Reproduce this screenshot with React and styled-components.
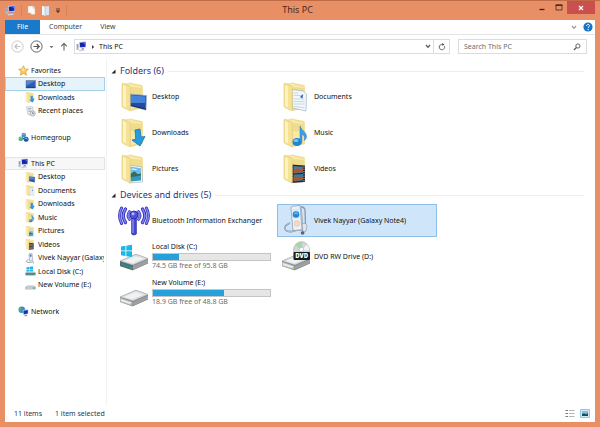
import React from "react";
import styled, { createGlobalStyle } from "styled-components";

const GlobalStyle = createGlobalStyle`
  * { box-sizing: border-box; }
  body { margin: 0; background: #e98f66; }
  body, button, input {
    font-family: "Noto Sans", "Open Sans", sans-serif;
    font-size: 7px;
    line-height: 10px;
    color: #111;
  }
  button { border: 0; padding: 0; background: none; text-align: left; }
  svg { display: block; flex: none; }
`;

const Window = styled.div`
  display: flex;
  flex-direction: column;
  height: 100vh;
  border-top: 1px solid #bf6b46;
  padding: 0 5px 5px;
  background: #e98f66;
`;

const TitleBar = styled.header`
  display: grid;
  grid-template-columns: 1fr auto 1fr;
  height: 19px;
  flex: none;
`;

const QuickAccess = styled.div`
  display: flex;
  align-items: center;
  gap: 5px;
`;

const Divider = styled.span`
  width: 1px;
  height: 11px;
  background: #d98259;
`;

const Title = styled.h1`
  margin: 0;
  padding-right: 5px;
  font-size: 9px;
  font-weight: 400;
  line-height: 17px;
  color: #4d2819;
`;

const WindowButtons = styled.div`
  display: flex;
  justify-content: flex-end;
  align-items: flex-start;
`;

const WindowButton = styled.button`
  display: flex;
  align-items: center;
  justify-content: center;
  width: ${(p) => (p.$close ? 28 : 17)}px;
  height: 13px;
  background: ${(p) => (p.$close ? "#c9504f" : "transparent")};
`;

const Body = styled.div`
  display: flex;
  flex-direction: column;
  flex: 1;
  min-height: 0;
  background: #fff;
`;

const Ribbon = styled.div`
  display: flex;
  align-items: center;
  flex: none;
  height: 15px;
  padding-right: 2px;
  border-bottom: 1px solid #e4e5e7;
`;

const Tab = styled.button`
  align-self: stretch;
  padding: 0 9px;
  color: #444;
`;

const FileTab = styled(Tab)`
  width: 35px;
  background: #1979ca;
  color: #fff;
  text-align: center;
`;

const RibbonTools = styled.div`
  display: flex;
  align-items: center;
  gap: 6px;
  margin-left: auto;
`;

const Toolbar = styled.div`
  display: flex;
  align-items: center;
  flex: none;
  height: 23px;
  padding: 0 8px 0 6px;
`;

const NavButtons = styled.div`
  display: flex;
  align-items: center;
  gap: 6px;
  width: 63px;
`;

const AddressBox = styled.div`
  display: flex;
  align-items: center;
  flex: 1;
  height: 15px;
  border: 1px solid #dcdcdc;
`;

const Crumb = styled.button`
  display: flex;
  align-items: center;
  gap: 4px;
  flex: 1;
  padding-left: 1px;
`;

const BoxButton = styled.button`
  display: flex;
  align-items: center;
  justify-content: center;
  width: ${(p) => (p.$ruled ? 16 : 11)}px;
  height: 13px;
  border-left: ${(p) => (p.$ruled ? "1px solid #dcdcdc" : "0")};
`;

const SearchBox = styled.label`
  display: flex;
  align-items: center;
  width: 129px;
  height: 15px;
  margin-left: 8px;
  padding: 0 5px;
  border: 1px solid #dcdcdc;
`;

const SearchInput = styled.input`
  flex: 1;
  min-width: 0;
  padding: 0;
  border: 0;
  outline: 0;
  background: none;
  &::placeholder { color: #6d6d6d; opacity: 1; }
`;

const Panes = styled.div`
  display: flex;
  flex: 1;
  min-height: 0;
`;

const Sidebar = styled.nav`
  display: flex;
  flex-direction: column;
  gap: 13px;
  width: 102px;
  flex: none;
  padding-top: 6px;
  border-right: 1px solid #f3f3f3;
`;

const TreeGroup = styled.div`
  display: flex;
  flex-direction: column;
`;

const TreeRow = styled.button`
  display: flex;
  align-items: center;
  gap: 2px;
  width: 100px;
  height: 13px;
  padding-left: ${(p) => (p.$nested ? 19 : 12)}px;
  border: 1px solid transparent;
  overflow: hidden;
  white-space: nowrap;
  &:nth-child(even) { height: 14px; }
  ${(p) => p.$state === "selected" && "background: #e5f3fb; border-color: #a5d2e9;"}
  ${(p) => p.$state === "current" && "background: #f7f7f7; border-color: #e3e3e3;"}
`;

const Main = styled.main`
  flex: 1;
  min-width: 0;
  padding: 6px 11px 0 4px;
`;

const Section = styled.section`
  margin-bottom: 3px;
`;

const SectionHeader = styled.div`
  display: flex;
  align-items: center;
  gap: 4px;
  height: 14px;
  margin-bottom: 2px;
  &::after {
    content: "";
    flex: 1;
    height: 1px;
    background: #ededf0;
  }
`;

const SectionTitle = styled.h2`
  margin: 0;
  font-size: 9px;
  font-weight: 400;
  line-height: 14px;
  color: #27357f;
`;

const Tiles = styled.div`
  display: grid;
  grid-template-columns: 160px 160px;
  gap: 3px 2px;
  padding-left: 4px;
`;

const Tile = styled.button`
  display: flex;
  align-items: center;
  gap: 3px;
  height: 33px;
  padding: 0 3px;
  border: 1px solid ${(p) => (p.$selected ? "#8dbfe8" : "transparent")};
  background: ${(p) => (p.$selected ? "#cfe5fa" : "transparent")};
`;

const TileText = styled.span`
  display: flex;
  flex-direction: column;
  flex: 1;
  min-width: 0;
  white-space: nowrap;
`;

const Meter = styled.span`
  display: block;
  height: 8px;
  margin-top: 1px;
  border: 1px solid #c4c4c4;
  background: #e6e6e6;
`;

const MeterFill = styled.span`
  display: block;
  height: 100%;
  background: #26a0da;
`;

const FreeSpace = styled.span`
  color: #6d6d6d;
`;

const StatusBar = styled.footer`
  display: flex;
  align-items: center;
  gap: 13px;
  flex: none;
  height: 17px;
  padding: 0 5px 0 9px;
  color: #1e395b;
`;

const ViewButtons = styled.div`
  display: flex;
  gap: 5px;
  margin-left: auto;
`;

/* ---------- small glyphs ---------- */

const PcIcon = ({ size = 11 }) => (
  <svg width={size} height={size} viewBox="0 0 11 11">
    <path d="M3 1l7-.5v6L3.500 7z" fill="#c9d0de" />
    <path d="M3.800 1.700l5.600-.5v4.500l-5.200.5z" fill="#1623b0" />
    <path d="M6.500 1.400l2.900-.2v3z" fill="#4d67e3" />
    <path d="M.5 3h2.200v6H.5z" fill="#aebccf" />
    <path d="M1 4h1.200M1 5.500h1.200" stroke="#5f7390" strokeWidth=".6" />
    <path d="M6 7l1.500-.2.800 1.800-3.300.4z" fill="#8a99b0" />
    <path d="M2.500 9l5.500-.8 1 1.300-5.500 1z" fill="#cbd5e2" />
  </svg>
);

const PageIcon = () => (
  <svg width="9" height="11" viewBox="0 0 9 11">
    <path d="M1 1h5.500L8 3v6.500H3.500V8H1z" fill="#fdf8f4" stroke="#d7b49f" strokeWidth=".5" />
    <path d="M6 1v2.200h2" fill="none" stroke="#c6b2a6" strokeWidth=".6" />
    <path d="M3.500 8L5 9.500H3z" fill="#e7934e" />
  </svg>
);

const NewFolderIcon = () => (
  <svg width="9" height="11" viewBox="0 0 9 11">
    <path d="M1 1l3 .5 4-.5v9l-4 .5-3-.5z" fill="#d7e3ee" />
    <path d="M1 1l3 1v8.500l-3-.7z" fill="#f3f7fb" />
    <path d="M4 2v8" stroke="#a5b9cc" strokeWidth=".6" />
  </svg>
);

const CustomizeIcon = () => (
  <svg width="6" height="6" viewBox="0 0 6 6">
    <path d="M1 1h4" stroke="#47281c" strokeWidth=".8" />
    <path d="M.7 2.600h4.600L3 5z" fill="#47281c" />
  </svg>
);

const MinimizeIcon = () => (
  <svg width="6" height="6" viewBox="0 0 6 6"><path d="M.5 4.500h5" stroke="#3f2115" strokeWidth="1.300" /></svg>
);
const MaximizeIcon = () => (
  <svg width="8" height="7" viewBox="0 0 8 7">
    <path d="M1 1h6v5H1z" fill="none" stroke="#5b301f" strokeWidth=".9" />
    <path d="M.6 1.200h6.800" stroke="#3f2115" strokeWidth="1.300" />
  </svg>
);
const CloseIcon = () => (
  <svg width="6" height="6" viewBox="0 0 6 6"><path d="M1 1l4 4M5 1L1 5" stroke="#fff" strokeWidth="1.200" /></svg>
);

const Chevron = ({ color = "#555" }) => (
  <svg width="6" height="5" viewBox="0 0 6 5"><path d="M1 1l2 2.400L5 1" fill="none" stroke={color} strokeWidth="1.200" /></svg>
);

const HelpIcon = () => (
  <svg width="10" height="10" viewBox="0 0 10 10">
    <circle cx="5" cy="5" r="4.600" fill="#1873c4" />
    <path d="M3.600 3.900c0-2 2.900-2 2.900-.2 0 1.200-1.400 1.100-1.400 2.200" fill="none" stroke="#fff" strokeWidth="1" />
    <circle cx="5.100" cy="7.500" r=".65" fill="#fff" />
  </svg>
);

const RoundArrow = ({ back }) => {
  const color = back ? "#c3c3c3" : "#555";
  return (
    <svg width="13" height="13" viewBox="0 0 13 13">
      <circle cx="6.500" cy="6.500" r="5.600" fill="none" stroke={color} strokeWidth=".9" />
      <path
        d={back ? "M9.500 6.500H4M6.300 4L3.800 6.500 6.300 9" : "M3.500 6.500H9M6.700 4l2.500 2.500L6.700 9"}
        fill="none" stroke={color} strokeWidth="1.200"
      />
    </svg>
  );
};

const DownTriangle = () => (
  <svg width="5" height="4" viewBox="0 0 5 4"><path d="M.5 1h4l-2 2.300z" fill="#777" /></svg>
);
const UpArrow = () => (
  <svg width="8" height="9" viewBox="0 0 8 9">
    <path d="M4 8.500V1.500M1.200 4.300L4 1.300l2.800 3" fill="none" stroke="#666" strokeWidth="1.100" />
  </svg>
);
const CrumbArrow = () => (
  <svg width="4" height="6" viewBox="0 0 4 6"><path d="M1 1l2.200 2L1 5z" fill="#444" /></svg>
);
const RefreshIcon = () => (
  <svg width="8" height="8" viewBox="0 0 8 8">
    <path d="M6.500 3.200A2.700 2.700 0 1 1 4.400 1.400" fill="none" stroke="#555" strokeWidth=".9" />
    <path d="M4 0l2.600 1.400L4.400 3z" fill="#555" />
  </svg>
);
const SearchIcon = () => (
  <svg width="8" height="8" viewBox="0 0 8 8">
    <circle cx="4.900" cy="3" r="2.100" fill="none" stroke="#555" strokeWidth=".9" />
    <path d="M3.400 4.500L.9 7" stroke="#555" strokeWidth="1.200" />
  </svg>
);
const Collapse = () => (
  <svg width="5" height="5" viewBox="0 0 5 5"><path d="M4.500.5v4h-4z" fill="#222" /></svg>
);

/* ---------- tree icons ---------- */

const StarIcon = () => (
  <svg width="11" height="11" viewBox="0 0 11 11">
    <path d="M5.500.7l1.400 3.200 3.500.4-2.600 2.400.7 3.500-3-1.700-3.100 1.700.7-3.500L.6 4.300l3.500-.4z" fill="#f8c75c" stroke="#d9922e" strokeWidth=".6" />
    <path d="M5.500 2.200l.8 2.200 2 .3-4.700 1.600z" fill="#fdeaa5" />
  </svg>
);
const ScreenIcon = () => (
  <svg width="11" height="11" viewBox="0 0 11 11">
    <path d="M1 1.500h9.500v7.500H1z" fill="#2c5fb5" stroke="#78838f" strokeWidth=".6" />
    <path d="M1.400 1.900h8.700L1.400 6.500z" fill="#5086d8" />
    <path d="M1.300 8.300h8.900" stroke="#1d396d" strokeWidth=".9" />
  </svg>
);
const RecentIcon = () => (
  <svg width="11" height="11" viewBox="0 0 11 11">
    <path d="M1.500.8h6l1.500 8H3z" fill="#edf1f4" stroke="#aeb6bd" strokeWidth=".6" />
    <path d="M3 2.500h3.500M3.200 4h3M3.500 5.500h2.500" stroke="#7e93a8" strokeWidth=".6" />
    <circle cx="7.700" cy="7.500" r="2.500" fill="#dbe7ee" stroke="#849197" strokeWidth=".6" />
    <path d="M7.700 6v1.600H9" fill="none" stroke="#45545e" strokeWidth=".6" />
  </svg>
);
const HomegroupIcon = () => (
  <svg width="11" height="11" viewBox="0 0 11 11">
    <circle cx="5.800" cy="3" r="2.300" fill="#3c87cf" />
    <circle cx="2.800" cy="6.800" r="2.300" fill="#4aa779" />
    <circle cx="8.100" cy="7.300" r="2.500" fill="#1e55ac" />
    <path d="M4.500 2.700c1-1 2-1 2.800 0M1.600 6.500c.8-1 1.800-1 2.500 0M6.700 7c.9-1.100 2-1 2.800 0" fill="none" stroke="#c6e5f2" strokeWidth=".8" />
    <path d="M4.600 5.400l1.200 1.700" stroke="#1e4a79" strokeWidth="1" />
  </svg>
);
const NetworkIcon = () => (
  <svg width="11" height="11" viewBox="0 0 11 11">
    <circle cx="3.800" cy="3.800" r="3.300" fill="#318fc1" />
    <path d="M1.500 2c2-1.600 3-.5 2 1S2 4.200 2.300 6C.8 5 .3 3.500 1.500 2z" fill="#54b56d" />
    <path d="M4.700 4l5.700-.7v5L5.300 9z" fill="#ccd5e3" />
    <path d="M5.400 4.700l4.400-.6v3.500l-4 .6z" fill="#1c2fae" />
    <path d="M7 8.800h1.500l1 1.500H6z" fill="#8e9aad" />
  </svg>
);

const DeviceIcon = () => (
  <svg width="11" height="11" viewBox="0 0 11 11">
    <path d="M4 .8l3-.3.800 7-3.300.5z" fill="#e7ebf0" stroke="#93a0b0" strokeWidth=".6" />
    <path d="M4.600 1.700l1.800-.2.200 2-1.800.2z" fill="#3c7bc4" />
    <path d="M3.500 6.500C0 8 1 9.500 4 9.500s5-2 4.500.8" fill="none" stroke="#8795a6" strokeWidth=".9" />
  </svg>
);
const SmallDrive = ({ system }) => (
  <svg width="11" height="11" viewBox="0 0 11 11">
    {system && (
      <g fill="#20b4e2">
        <path d="M1.500 1.300l2.500-.4v2.300H1.500zM4.500.8L8 .4v2.800H4.500zM1.500 3.700H4V6l-2.500-.3zM4.500 3.700H8v2.800l-3.500-.4z" />
      </g>
    )}
    <path d="M.5 6.500L3 5.300h6l1.500 1.200v2.800H.5z" fill="#d5d8da" />
    <path d="M.5 6.700h10v2.600H.5z" fill={system ? "#5c7e86" : "#a0a4a7"} />
    <path d="M1.200 7.400h6.500v1.200H1.200z" fill={system ? "#2c9db3" : "#e5e7e8"} />
    <circle cx="9.300" cy="8.200" r=".5" fill="#5bc864" />
  </svg>
);

/* ---------- folders ---------- */

const overlays = {
  desktop: (
    <g>
      <path d="M8.500 12l17 1.500-.5 14.500L9 24z" fill="#234a9c" stroke="#a5b4c8" strokeWidth=".8" />
      <path d="M9.500 13l15 1.400-.4 6.600L9.800 21z" fill="#4583dd" />
      <path d="M9.500 23.300L25 27.300" stroke="#172b5b" strokeWidth="1" />
    </g>
  ),
  downloads: (
    <path d="M14 12l5-1 1 8 4-.5-5 9.500-8-6 3.700-.7z" fill="#259be0" stroke="#1268a8" strokeWidth=".7" />
  ),
  documents: (
    <g>
      <path d="M9 7.500L20.500 9l3 3-.5 17L9.500 26z" fill="#f2f7fc" stroke="#96a7b8" strokeWidth=".6" />
      <path d="M10.500 11h5M10.500 13.500h10M10.500 17h11M10.500 19.500h11M10.500 22h11M10.500 24.300l11 1.500" stroke="#b4c8e0" strokeWidth=".7" />
      <path d="M17 15l3-3-.5 4.500z" fill="#2a62a8" />
    </g>
  ),
  music: (
    <g>
      <ellipse cx="14" cy="24" rx="5" ry="4" fill="#1d86d2" />
      <path d="M17 24V8c1 4 7 6 6.500 11-.2 2-1.500 3-2.200 3.500 1-4-.5-5.500-2.300-6V24z" fill="#3da0e4" stroke="#1469b0" strokeWidth=".4" />
      <ellipse cx="13" cy="22.600" rx="2.600" ry="1.500" fill="#78c4f2" />
    </g>
  ),
  pictures: (
    <g>
      <path d="M8 11l13 2 .5 15L8.500 29z" fill="#f7fbfc" stroke="#9babb3" strokeWidth=".6" />
      <path d="M9.300 12.500l10.700 1.800v5L9.400 20z" fill="#6fbde8" />
      <path d="M9.400 20l4-2.800 3 2.500 3.600-.5v3l-10.500 2z" fill="#336d5d" />
      <path d="M9.500 23.200L20 21.500v5l-10.500 1z" fill="#3597bd" />
      <path d="M10.500 15.500c2-1.500 3 .5 5 0" fill="none" stroke="#fff" strokeWidth="1" />
    </g>
  ),
  videos: (
    <g>
      <path d="M8 10.500l14 1V28L8.500 29z" fill="#26292f" />
      <path d="M10.500 12l9.500.7v6l-9.500.7z" fill="#407fa8" />
      <path d="M10.500 20.500l9.500-.4v6.500l-9.500.9z" fill="#347c9d" />
      <path d="M10.500 16.500l4-3 2 2 3.500-1.500v4l-9.500.9zM10.500 24l4-2 2 1.500 3.500-1v3.300l-9.500 1.200z" fill="#b1532d" />
      <path d="M9.200 11.500v17M21 12.500v15" stroke="#dae1e4" strokeWidth=".9" strokeDasharray="1 1.300" />
    </g>
  ),
};

const FolderIcon = ({ kind, size = 30 }) => (
  <svg width={size === 30 ? 27 : size} height={size} viewBox="0 0 27 30">
    <path d="M2 2L10 .5q1-.2 1.500.8l9 1.700q1.300.3 1.300 1.500V26l-12 3z" fill="#eeda8c" />
    <path d="M3 2.200l7.500-1 1 1.300 9 1.700V25l-11 2z" fill="#f8e9a8" />
    <path d="M10 5l10.500 1v8l-10.500-1z" fill="#e8cf72" opacity=".5" />
    {overlays[kind]}
    <path d="M1 2.200Q1 1 2.200 1.300L8.300 4q1 .4 1 1.500V29L2 25.500q-1-.5-1-1.500z" fill="#f6e295" stroke="#d9bd5e" strokeWidth=".5" />
    <path d="M2 3l3 1.500v21L2 24z" fill="#fcf2c4" />
  </svg>
);

/* ---------- device icons ---------- */

const BluetoothIcon = () => (
  <svg width="32" height="31" viewBox="0 0 32 31">
    <g fill="none" stroke="#3431bd" strokeLinecap="round">
      <path d="M11.500 6.500Q8.500 10.500 11.500 14.500M20.500 6.500Q23.500 10.500 20.500 14.500" strokeWidth="2.800" />
      <path d="M7.500 4Q3 10.500 7.500 17.500M24.500 4Q29 10.500 24.500 17.500" strokeWidth="3.300" />
      <path d="M3.600 3Q-.5 10.500 3.600 18.500M28.400 3Q32.500 10.500 28.400 18.500" strokeWidth="3" />
    </g>
    <g fill="none" stroke="#8083ee" strokeLinecap="round" strokeWidth="1.500">
      <path d="M11.500 6.500Q8.500 10.500 11.500 14.500M20.500 6.500Q23.500 10.500 20.500 14.500" />
      <path d="M7.500 4Q3 10.500 7.500 17.500M24.500 4Q29 10.500 24.500 17.500" />
      <path d="M3.600 3Q-.5 10.500 3.600 18.500M28.400 3Q32.500 10.500 28.400 18.500" />
    </g>
    <path d="M13.700 12h4.600v17q-2.300 2-4.600 0z" fill="#4949d8" stroke="#2a299f" strokeWidth=".8" />
    <path d="M15 14v14" stroke="#a5a8f6" strokeWidth="1" />
    <circle cx="16" cy="10" r="4" fill="#4d50df" stroke="#2a299f" strokeWidth=".9" />
    <circle cx="15" cy="8.800" r="1.500" fill="#b4b7fa" />
  </svg>
);

const DriveBody = ({ system }) => (
  <g>
    <path d="M1 20L16 13.500q1-.3 2 0l11 4v5L14.500 29q-1 .4-2 0L1 25z" fill="#74797c" />
    <path d="M1 20l15-6.500q1-.3 2 0l11 4-15 6.500z" fill="#dcdfe0" stroke="#a1a5a8" strokeWidth=".5" />
    <path d="M5 20l11.500-4.700 8 2.300-11 4.700z" fill="#f1f2f2" />
    <path d="M1 20.500l12.500 4.200v4.400L1 25z" fill={system ? "#4e6c70" : "#b4b7b8"} />
    <path d="M2 22l10.500 3.500v2L2 24.200z" fill={system ? "#2e8a91" : "#eceeee"} />
    <path d="M14 24.700l15-6.500v4l-15 6.600z" fill="#9ca0a2" />
    <circle cx="12" cy="27" r=".7" fill="#5dc86b" />
  </g>
);

const DriveIcon = ({ system }) => (
  <svg width="30" height="31" viewBox="0 0 30 31">
    <DriveBody system={system} />
    {system && (
      <path d="M2 5.500l4.500-.7v4.700H2zM7.300 4.700l5.700-.9v5.700H7.300zM2 10.300h4.500V15L2 14.300zM7.300 10.300H13V16l-5.700-.8z" fill="#1ab7e8" />
    )}
  </svg>
);

const DvdIcon = () => (
  <svg width="30" height="31" viewBox="0 0 30 31">
    <DriveBody />
    <ellipse cx="20.500" cy="9.500" rx="8" ry="8.800" fill="#d0d6d4" stroke="#9aa09f" strokeWidth=".6" />
    <path d="M20.500 9.500L14 4q3-3.500 7-3.200z" fill="#a7d5a8" />
    <path d="M20.500 9.500l5.500-6q2.500 2.500 2.400 6z" fill="#f4f6f6" />
    <ellipse cx="20.500" cy="8.500" rx="2.300" ry="2.200" fill="#fff" stroke="#989f9e" strokeWidth=".5" />
    <rect x="12.500" y="11" width="16.500" height="8" rx="1" fill="#17191b" />
    <text x="20.700" y="17.300" textAnchor="middle" fontFamily="Open Sans, sans-serif" fontSize="6" fontWeight="800" fill="#fff">DVD</text>
  </svg>
);

const PhoneIcon = () => (
  <svg width="30" height="31" viewBox="0 0 30 31">
    <path d="M17 3.500q5-3.500 7 1l.5 15" fill="none" stroke="#8b97a8" strokeWidth="1.300" />
    <path d="M9 18Q2 21 4.500 25q3 3 10 .5t8.500 3" fill="none" stroke="#79879b" strokeWidth="1.600" />
    <path d="M9 18Q2 21 4.500 25q3 3 10 .5t8.500 3" fill="none" stroke="#dce5f0" strokeWidth=".6" />
    <path d="M10 3q0-1.500 1.500-1.700l7-.8q1.500 0 1.700 1.500l1.800 21q0 1.500-1.500 1.700l-7 .8q-1.500 0-1.700-1.500z" fill="#edf1f6" stroke="#8896a8" strokeWidth=".7" />
    <path d="M18.500.5q1.500 0 1.700 1.500l1.800 21q0 1.300-1.500 1.700z" fill="#a9b6c7" />
    <path d="M11.700 4.200l6-.7.800 9-6 .7z" fill="#cfe8fa" />
    <circle cx="15" cy="9.500" r="3.300" fill="#2387d3" />
    <path d="M13 9q2-2.500 4 0" fill="none" stroke="#b4e0fa" strokeWidth=".8" />
    <circle cx="16" cy="18.500" r="2.800" fill="#f8d9c4" stroke="#cfb9b0" strokeWidth=".5" />
    <path d="M21 19q4-2 5 2l-1 5-3 1z" fill="#dfe5ed" stroke="#8492a5" strokeWidth=".6" />
    <circle cx="21.500" cy="28" r="1.800" fill="#55657e" />
  </svg>
);

const ListViewIcon = () => (
  <svg width="10" height="9" viewBox="0 0 10 9">
    <path d="M.5 1.500H3M.5 4.500H3M.5 7.500H3" stroke="#737d85" strokeWidth="1.200" />
    <path d="M4 1.500h5.500M4 4.500h5.500M4 7.500h5.500" stroke="#9aa2a8" strokeWidth=".8" />
  </svg>
);
const ThumbViewIcon = () => (
  <svg width="10" height="9" viewBox="0 0 10 9">
    <path d="M.5.5h9v8h-9z" fill="#cfeaf6" stroke="#78bfdd" strokeWidth=".8" />
    <path d="M2 2h6v5H2z" fill="#87bedd" />
    <path d="M2 7V5l2-.7 2 1L8 4v3z" fill="#224a5d" />
  </svg>
);

/* ---------- data ---------- */

const small = (kind) => <FolderIcon kind={kind} size={11} />;

const tree = [
  [
    { name: "Favorites", icon: <StarIcon /> },
    { name: "Desktop", icon: <ScreenIcon />, nested: true, state: "selected" },
    { name: "Downloads", icon: small("downloads"), nested: true },
    { name: "Recent places", icon: <RecentIcon />, nested: true },
  ],
  [{ name: "Homegroup", icon: <HomegroupIcon /> }],
  [
    { name: "This PC", icon: <PcIcon />, state: "current" },
    { name: "Desktop", icon: small("desktop"), nested: true },
    { name: "Documents", icon: small("documents"), nested: true },
    { name: "Downloads", icon: small("downloads"), nested: true },
    { name: "Music", icon: small("music"), nested: true },
    { name: "Pictures", icon: small("pictures"), nested: true },
    { name: "Videos", icon: small("videos"), nested: true },
    { name: "Vivek Nayyar (Galaxy Note4)", icon: <DeviceIcon />, nested: true },
    { name: "Local Disk (C:)", icon: <SmallDrive system />, nested: true },
    { name: "New Volume (E:)", icon: <SmallDrive />, nested: true },
  ],
  [{ name: "Network", icon: <NetworkIcon /> }],
];

const sections = [
  {
    title: "Folders (6)",
    items: ["Desktop", "Documents", "Downloads", "Music", "Pictures", "Videos"].map((name) => ({
      name,
      icon: <FolderIcon kind={name.toLowerCase()} />,
    })),
  },
  {
    title: "Devices and drives (5)",
    items: [
      { name: "Bluetooth Information Exchanger", icon: <BluetoothIcon /> },
      { name: "Vivek Nayyar (Galaxy Note4)", icon: <PhoneIcon />, selected: true },
      { name: "Local Disk (C:)", icon: <DriveIcon system />, used: 22, free: "74.5 GB free of 95.8 GB" },
      { name: "DVD RW Drive (D:)", icon: <DvdIcon /> },
      { name: "New Volume (E:)", icon: <DriveIcon />, used: 61, free: "18.9 GB free of 48.8 GB" },
    ],
  },
];

const TileIcon = styled.span`
  display: flex;
  justify-content: center;
  width: 30px;
  flex: none;
`;

export default function App() {
  return (
    <Window>
      <GlobalStyle />
      <TitleBar>
        <QuickAccess>
          <PcIcon />
          <Divider />
          <PageIcon />
          <NewFolderIcon />
          <CustomizeIcon />
          <Divider />
        </QuickAccess>
        <Title>This PC</Title>
        <WindowButtons>
          <WindowButton aria-label="Minimize"><MinimizeIcon /></WindowButton>
          <WindowButton aria-label="Maximize"><MaximizeIcon /></WindowButton>
          <WindowButton $close aria-label="Close"><CloseIcon /></WindowButton>
        </WindowButtons>
      </TitleBar>
      <Body>
        <Ribbon>
          <FileTab>File</FileTab>
          <Tab>Computer</Tab>
          <Tab>View</Tab>
          <RibbonTools>
            <button aria-label="Expand ribbon"><Chevron color="#999" /></button>
            <button aria-label="Help"><HelpIcon /></button>
          </RibbonTools>
        </Ribbon>
        <Toolbar>
          <NavButtons>
            <button aria-label="Back"><RoundArrow back /></button>
            <button aria-label="Forward"><RoundArrow /></button>
            <button aria-label="Recent locations"><DownTriangle /></button>
            <button aria-label="Up"><UpArrow /></button>
          </NavButtons>
          <AddressBox>
            <Crumb><PcIcon /><CrumbArrow />This PC</Crumb>
            <BoxButton aria-label="Previous locations"><Chevron /></BoxButton>
            <BoxButton $ruled aria-label="Refresh"><RefreshIcon /></BoxButton>
          </AddressBox>
          <SearchBox>
            <SearchInput type="search" placeholder="Search This PC" aria-label="Search This PC" />
            <SearchIcon />
          </SearchBox>
        </Toolbar>
        <Panes>
          <Sidebar>
            {tree.map((group) => (
              <TreeGroup key={group[0].name}>
                {group.map((row) => (
                  <TreeRow key={row.name} $nested={row.nested} $state={row.state}>
                    {row.icon}
                    {row.name}
                  </TreeRow>
                ))}
              </TreeGroup>
            ))}
          </Sidebar>
          <Main>
            {sections.map((section) => (
              <Section key={section.title}>
                <SectionHeader>
                  <Collapse />
                  <SectionTitle>{section.title}</SectionTitle>
                </SectionHeader>
                <Tiles>
                  {section.items.map((item) => (
                    <Tile key={item.name} $selected={item.selected}>
                      <TileIcon>{item.icon}</TileIcon>
                      <TileText>
                        {item.name}
                        {item.free && (
                          <>
                            <Meter role="meter" aria-label="Space used" aria-valuenow={item.used} aria-valuemin={0} aria-valuemax={100}>
                              <MeterFill style={{ width: `${item.used}%` }} />
                            </Meter>
                            <FreeSpace>{item.free}</FreeSpace>
                          </>
                        )}
                      </TileText>
                    </Tile>
                  ))}
                </Tiles>
              </Section>
            ))}
          </Main>
        </Panes>
        <StatusBar>
          <span>11 items</span>
          <span>1 item selected</span>
          <ViewButtons>
            <button aria-label="Details view"><ListViewIcon /></button>
            <button aria-label="Large icons view"><ThumbViewIcon /></button>
          </ViewButtons>
        </StatusBar>
      </Body>
    </Window>
  );
}
